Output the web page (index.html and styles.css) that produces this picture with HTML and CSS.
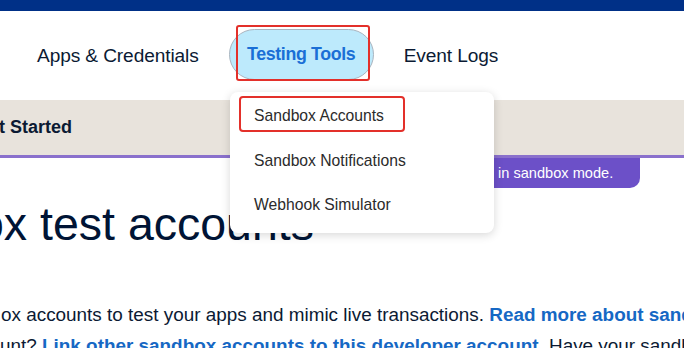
FILE: index.html
```html
<!DOCTYPE html>
<html lang="en">
<head>
<meta charset="utf-8">
<title>Sandbox test accounts</title>
<link rel="stylesheet" href="styles.css">
</head>
<body>
<div class="page">
  <div class="topbar"></div>
  <nav class="nav">
    <a class="nav-item">Apps &amp; Credentials</a>
    <a class="nav-item nav-pill">Testing Tools<span class="mark mark-pill"></span></a>
    <a class="nav-item">Event Logs</a>
  </nav>
  <div class="band"><span class="band-title">t Started</span></div>
  <div class="badge-row"><div class="badge">in sandbox mode.</div></div>
  <h1 class="title">ox test accounts</h1>
  <p class="text"><span class="line">ox accounts to test your apps and mimic live transactions. <a class="link">Read more about sandbox accounts</a></span><span class="line">unt? <a class="link">Link other sandbox accounts to this developer account.</a> Have your sandbox accounts</span></p>

  <div class="menu">
    <div class="menu-item"><span class="mark-item">Sandbox Accounts</span></div>
    <div class="menu-item">Sandbox Notifications</div>
    <div class="menu-item">Webhook Simulator</div>
  </div>
</div>
</body>
</html>
```

FILE: styles.css
```css
* { box-sizing: border-box; }
html, body { margin: 0; padding: 0; background: #fff; }
body {
  width: 684px;
  height: 348px;
  overflow: hidden;
  font-family: "Liberation Sans", Arial, sans-serif;
  color: #001435;
}
.page { position: relative; width: 684px; height: 348px; overflow: hidden; }

.topbar { height: 11px; background: #003087; }

.nav {
  height: 89px;
  display: flex;
  align-items: center;
  gap: 30px;
  padding-left: 37px;
}
.nav-item {
  font-size: 19.1px;
  color: #0b1a33;
  white-space: nowrap;
  letter-spacing: -0.1px;
}
.nav-pill {
  position: relative;
  height: 51px;
  width: 145px;
  display: flex;
  align-items: center;
  justify-content: center;
  border: 1px solid #a9b4bf;
  border-radius: 26px;
  background: #bdeafc;
  color: #1a6fd6;
  font-weight: 700;
  font-size: 17.8px;
  letter-spacing: -0.35px;
  margin-top: -2px;
}
.mark {
  position: absolute;
  border: 2.5px solid #e3302a;
  border-radius: 3px;
}
.mark-pill { left: 6px; right: 3px; top: -5px; bottom: -2px; }

.band {
  height: 58px;
  background: #e8e3dc;
  border-bottom: 3px solid #8a70cc;
  display: flex;
  align-items: center;
  padding-bottom: 1px;
}
.band-title {
  font-size: 18px;
  font-weight: 700;
  color: #0b1a33;
  margin-left: -1px;
}

.badge-row { display: flex; justify-content: flex-end; padding-right: 44px; }
.badge {
  height: 30px;
  width: 300px;
  padding-left: 158px;
  display: flex;
  align-items: center;
  background: #6c50c8;
  color: #fff;
  font-size: 14.6px;
  border-radius: 0 0 10px 10px;
}

.title {
  margin: 9px 0 0 -22px;
  font-size: 46.5px;
  line-height: 55px;
  font-weight: 400;
  color: #001435;
  white-space: nowrap;
}

.text {
  margin: 47px 0 0 0;
  font-size: 18.9px;
  line-height: 31px;
  color: #0b1a33;
}
.line { display: block; white-space: nowrap; }
.line:first-child { margin-left: 1px; }
.link { color: #1668c4; font-weight: 700; }

.menu {
  position: absolute;
  left: 230px;
  top: 92px;
  width: 264px;
  height: 141px;
  background: #fff;
  border-radius: 8px;
  box-shadow: 0 2px 10px rgba(0, 0, 0, 0.16);
  padding: 4px 0 0 9px;
  display: flex;
  flex-direction: column;
}
.menu-item {
  height: 43.5px;
  display: flex;
  align-items: center;
  padding-left: 15px;
  font-size: 15.7px;
  color: #2b2b2b;
  white-space: nowrap;
}
.menu-item:first-child { padding-left: 0; }
.mark-item {
  display: flex;
  align-items: center;
  height: 36px;
  width: 166px;
  padding-left: 13px;
  padding-top: 3px;
  border: 2.5px solid #e3302a;
  border-radius: 4px;
  margin-top: -7px;
}
```
